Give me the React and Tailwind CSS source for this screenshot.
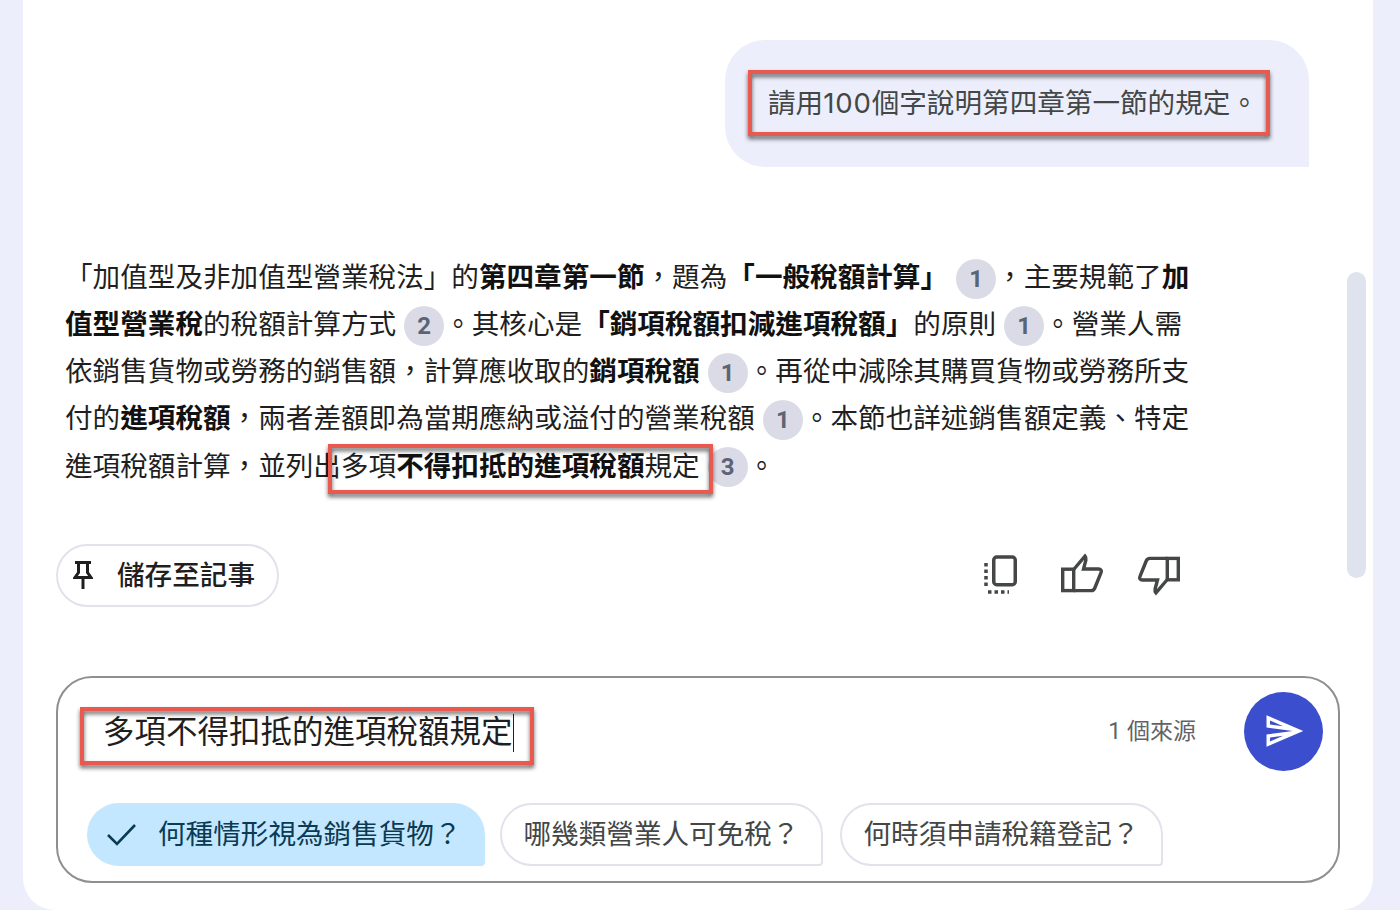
const Cite = ({ n }) => (
  <span className="ml-[8px] mt-[2px] flex h-[40px] w-[40px] shrink-0 items-center justify-center rounded-full bg-[#dadbe6] text-[24px] font-bold text-[#5b6475]">
    {n}
  </span>
);

const Line = ({ children }) => (
  <div className="flex h-[47.2px] items-center whitespace-pre">{children}</div>
);

const RedBox = ({ className }) => (
  <div className={`absolute border-4 border-[#e8594f] drop-shadow-[0_3px_2px_rgba(0,0,0,0.6)] ${className}`} />
);

const B = ({ children }) => <b className="font-semibold text-[#111111]">{children}</b>;

const CopyIcon = () => (
  <svg width="36" height="42" viewBox="0 0 36 42" fill="none" stroke="#444746">
    <rect x="9.75" y="3" width="21.5" height="27.75" rx="3" strokeWidth="3.5" />
    <path d="M2 9v25" strokeWidth="3.5" strokeDasharray="3.5 3" />
    <path d="M4 38h21" strokeWidth="3.5" strokeDasharray="3.5 3" />
  </svg>
);

const Thumb = ({ className = "" }) => (
  <svg width="44" height="44" viewBox="0 0 44 44" fill="none" stroke="#444746" strokeWidth="3.4" strokeLinejoin="miter" className={className}>
    <rect x="2.7" y="17.2" width="11" height="21.4" />
    <path d="M13.7 17.5 25 4.2c1 1.2 1.2 2.4.9 3.8L23.5 17H38.5c2.6 0 3.4 1.6 2.5 3.6L34.8 36c-.7 1.8-1.8 2.6-3.6 2.6H13.7" />
  </svg>
);

export default function App() {
  return (
    <div className="h-[910px] w-[1400px] overflow-hidden bg-[#eceffb] pl-[23px] font-['Roboto','Noto_Sans_CJK_TC',sans-serif] text-[27.6px] text-[#1f1f1f]">
      <div className="flex h-[910px] w-[1350px] rounded-b-[32px] bg-white">
        <main className="w-[1324px] pl-[33px] pr-[7px] pt-[40px]">
          {/* user bubble */}
          <div className="relative ml-[669px] flex h-[127px] w-[584px] items-center rounded-[40px] rounded-br-none bg-[#eceffb] pl-[43px] font-['Inter','Noto_Sans_CJK_TC',sans-serif] text-[#444746]">
            <span>
              請用<span className="tracking-[0.8px]">100</span>個字說明第四章第一節的規定。
            </span>
            <RedBox className="left-[23px] top-[30px] h-[66px] w-[522px]" />
          </div>

          {/* answer */}
          <div className="relative mt-[87px] pl-[9px]">
            <Line>
              「加值型及非加值型營業稅法」的<B>第四章第一節</B>，題為<B>「一般稅額計算」</B>
              <Cite n="1" />，主要規範了<B>加</B>
            </Line>
            <Line>
              <B>值型營業稅</B>的稅額計算方式<Cite n="2" />。其核心是<B>「銷項稅額扣減進項稅額」</B>的原則
              <Cite n="1" />。營業人需
            </Line>
            <Line>
              依銷售貨物或勞務的銷售額，計算應收取的<B>銷項稅額</B>
              <Cite n="1" />。再從中減除其購買貨物或勞務所支
            </Line>
            <Line>
              付的<B>進項稅額</B>，兩者差額即為當期應納或溢付的營業稅額<Cite n="1" />。本節也詳述銷售額定義、特定
            </Line>
            <Line>
              進項稅額計算，並列出多項<B>不得扣抵的進項稅額</B>規定<Cite n="3" />。
            </Line>
            <RedBox className="left-[272px] top-[190px] h-[50px] w-[385px]" />
          </div>

          {/* actions */}
          <div className="mt-[54px] flex h-[63px] items-center justify-between pr-[159px]">
            <button className="flex h-[63px] w-[223px] items-center rounded-full border-2 border-[#e1e3ec] pl-[15px] font-medium">
              <svg width="20" height="28" viewBox="0 0 20 28" fill="none" stroke="#1f1f1f" strokeWidth="3">
                <path d="M2 1.5h16M5.5 1.5v10L2 16.5h16l-3.5-5v-10M10 16.5V28" />
              </svg>
              <span className="ml-[24px]">儲存至記事</span>
            </button>
            <div className="flex items-center">
              <CopyIcon />
              <Thumb className="mb-[3px] ml-[40px]" />
              <Thumb className="ml-[33px] rotate-180" />
            </div>
          </div>

          {/* input */}
          <div className="mt-[69px] h-[207px] w-[1284px] rounded-[36px] border-2 border-[#8f8f8f]">
            <div className="relative flex items-center pl-[45px] pr-[15px] pt-[14px]">
              <div className="mt-[4px] flex items-center text-[31.5px] leading-[44px]">
                多項不得扣抵的進項稅額規定
                <span className="h-[38px] w-[1.5px] bg-[#1f1f1f]" />
              </div>
              <span className="ml-auto mt-[2px] text-[23px] text-[#5f6368]">1 個來源</span>
              <button className="ml-[48px] flex h-[79px] w-[79px] items-center justify-center rounded-full bg-[#3b4fce]">
                <svg width="42" height="42" viewBox="0 0 24 24" fill="#ffffff">
                  <path d="M4.01 6.03l7.51 3.22-7.52-1 .01-2.22m7.5 8.72L4 17.97v-2.22l7.51-1M2.01 3L2 10l15 2-15 2 .01 7L23 12 2.01 3z" />
                </svg>
              </button>
              <RedBox className="left-[22px] top-[29px] h-[58px] w-[454px]" />
            </div>
            <div className="mt-[32px] flex items-center pl-[29px]">
              <div className="flex h-[63px] w-[398px] items-center rounded-[32px] rounded-br-[4px] bg-[#c2e7ff] pl-[18px] text-[#0b3a53]">
                <svg width="32" height="24" viewBox="0 0 32 24" fill="none" stroke="#0b3a53" strokeWidth="2.6">
                  <path d="M3 13l9 9L30 3" />
                </svg>
                <span className="ml-[21px]">何種情形視為銷售貨物？</span>
              </div>
              <div className="ml-[15px] flex h-[63px] w-[323px] items-center justify-center rounded-[32px] rounded-br-[4px] border-2 border-[#e1e3ec] text-[#444746]">
                哪幾類營業人可免稅？
              </div>
              <div className="ml-[17px] flex h-[63px] w-[323px] items-center justify-center rounded-[32px] rounded-br-[4px] border-2 border-[#e1e3ec] text-[#444746]">
                何時須申請稅籍登記？
              </div>
            </div>
          </div>
        </main>

        {/* scrollbar */}
        <div className="mt-[272px] h-[306px] w-[19px] rounded-full bg-[#dfe3ee]" />
      </div>
    </div>
  );
}
